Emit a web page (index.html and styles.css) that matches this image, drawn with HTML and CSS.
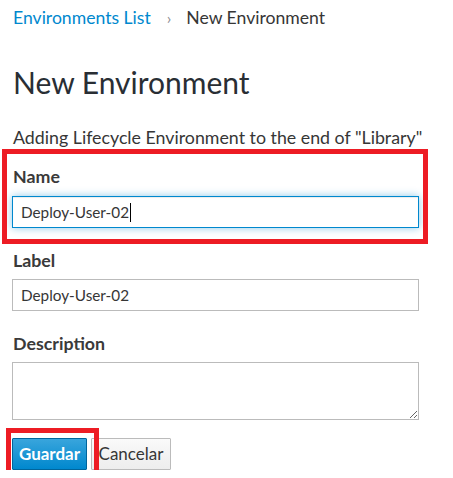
FILE: index.html
```html
<!DOCTYPE html>
<html lang="en">
<head>
<meta charset="utf-8">
<title>New Environment</title>
<link rel="stylesheet" href="styles.css">
</head>
<body>
<div class="page">
  <nav class="breadcrumb">
    <a class="crumb-link" href="#">Environments List</a>
    <span class="crumb-sep">›</span>
    <span class="crumb-current">New Environment</span>
  </nav>

  <h1 class="title">New Environment</h1>
  <p class="subtitle">Adding Lifecycle Environment to the end of "Library"</p>

  <form class="form">
    <div class="group group-name">
      <span class="annot annot-name"></span>
      <label class="field-label">Name</label>
      <div class="input input-focus">Deploy-User-02<span class="caret"></span></div>
    </div>

    <div class="group group-label">
      <label class="field-label">Label</label>
      <div class="input">Deploy-User-02</div>
    </div>

    <div class="group group-desc">
      <label class="field-label">Description</label>
      <textarea class="textarea"></textarea>
    </div>

    <div class="actions">
      <span class="save-wrap">
        <button type="button" class="btn btn-primary">Guardar</button>
        <span class="annot annot-save"></span>
      </span>
      <button type="button" class="btn btn-default">Cancelar</button>
    </div>
  </form>
</div>
</body>
</html>
```
FILE: styles.css
```css
html, body {
  margin: 0;
  padding: 0;
  background: #ffffff;
}

body {
  font-family: Lato, "Open Sans", "Liberation Sans", sans-serif;
  color: #363636;
}

.page {
  padding: 0 0 0 12px;
}

.breadcrumb {
  height: 36px;
  line-height: 36px;
  font-size: 17.6px;
  padding-left: 1px;
  display: flex;
  align-items: center;
  white-space: nowrap;
}

.crumb-link {
  color: #0088ce;
  text-decoration: none;
}

.crumb-sep {
  color: #8b8d8f;
  margin: 0 15px 0 16px;
  font-size: 16px;
}

.crumb-current {
  color: #363636;
}

.title {
  margin: 26px 0 0 0;
  padding-left: 1px;
  font-size: 30px;
  line-height: 40px;
  font-weight: 400;
  color: #292e34;
}

.subtitle {
  margin: 23px 0 0 0;
  padding-left: 1px;
  font-size: 17.8px;
  line-height: 24px;
  white-space: nowrap;
}

.form {
  margin: 0;
}

.group {
  position: relative;
  width: 407px;
}

.group-name {
  padding-top: 17px;
}

.group-label {
  margin-top: 22px;
}

.group-desc {
  margin-top: 22px;
}

.field-label {
  display: block;
  padding-left: 1px;
  font-size: 17.8px;
  font-weight: 700;
  line-height: 20px;
  color: #3a3a3a;
  margin-bottom: 10px;
}

.group-label .field-label {
  margin-bottom: 9px;
}

.group-desc .field-label {
  margin-bottom: 9px;
}

.input {
  box-sizing: border-box;
  width: 407px;
  height: 32px;
  border: 1px solid #bbbbbb;
  padding: 0 8px;
  font-size: 15.3px;
  line-height: 30px;
  color: #363636;
  background: #fff;
  white-space: nowrap;
}

.input-focus {
  border-color: #0088ce;
  box-shadow: inset 0 1px 1px rgba(3, 3, 3, 0.075), 0 0 8px rgba(0, 136, 206, 0.45);
}

.caret {
  display: inline-block;
  width: 1px;
  height: 19px;
  background: #000;
  vertical-align: -4px;
  margin-left: 1px;
}

.textarea {
  display: block;
  box-sizing: border-box;
  width: 407px;
  height: 58px;
  margin: 0;
  border: 1px solid #bbbbbb;
  border-radius: 0;
  padding: 6px 8px;
  font-family: inherit;
  font-size: 16px;
  resize: both;
}

.actions {
  display: flex;
  gap: 4px;
  margin-top: 18px;
}

.save-wrap {
  position: relative;
  display: inline-flex;
}

.btn {
  box-sizing: border-box;
  height: 32px;
  font-family: inherit;
  font-size: 17px;
  line-height: 30px;
  padding: 0;
  border-radius: 1px;
  cursor: pointer;
  text-align: center;
}

.btn-primary {
  width: 75px;
  color: #fff;
  font-weight: 700;
  background: linear-gradient(to bottom, #39a5dc 0%, #0088ce 100%);
  border: 1px solid #00659c;
}

.btn-default {
  width: 80px;
  color: #363636;
  font-weight: 400;
  background: linear-gradient(to bottom, #fafafa 0%, #ededed 100%);
  border: 1px solid #bbbbbb;
}

.annot {
  position: absolute;
  border: 5px solid #ed1c24;
  pointer-events: none;
}

.annot-name {
  top: 0;
  left: -10px;
  right: -9px;
  bottom: -16px;
}

.annot-save {
  top: -10px;
  left: -6px;
  right: -12px;
  bottom: -6px;
}
```
